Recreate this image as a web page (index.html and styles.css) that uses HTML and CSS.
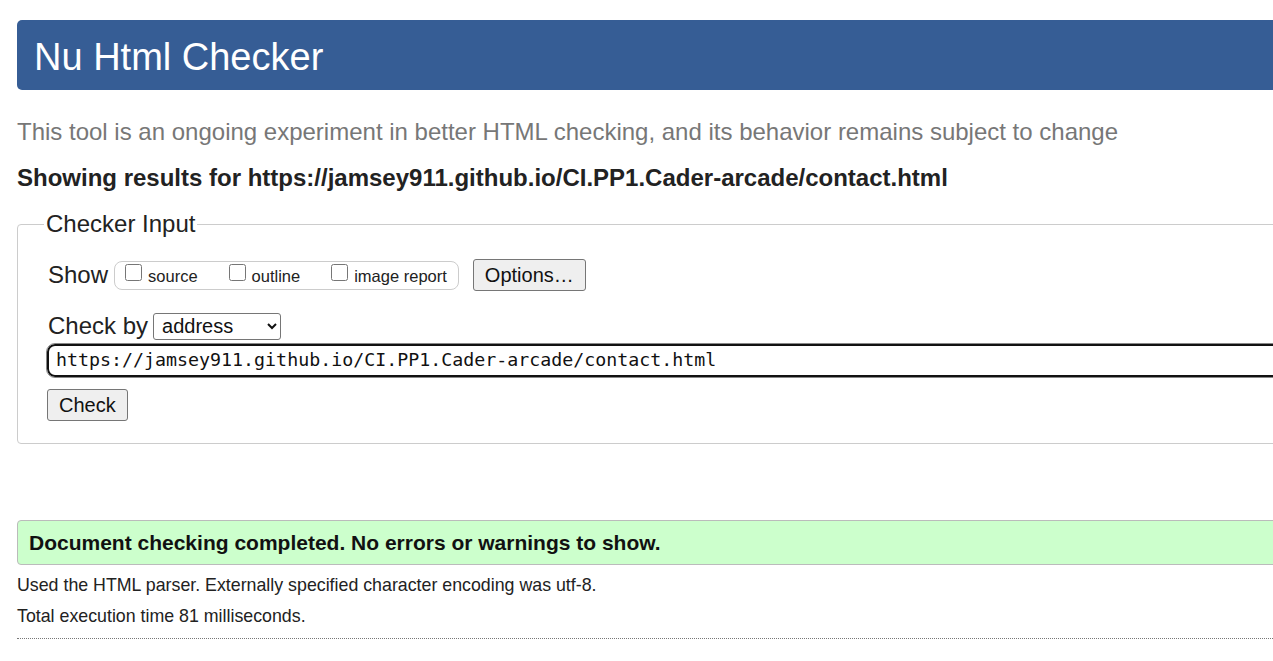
FILE: index.html
```html
<!DOCTYPE html>
<html lang="en">
<head>
<meta charset="utf-8">
<title>Nu Html Checker</title>
<link rel="stylesheet" href="styles.css">
</head>
<body>
<div class="page">
  <h1 class="title-bar">Nu Html Checker</h1>
  <p class="intro">This tool is an ongoing experiment in better HTML checking, and its behavior remains subject to change</p>
  <p class="showing">Showing results for https://jamsey911.github.io/CI.PP1.Cader-arcade/contact.html</p>
  <fieldset class="checker">
    <legend>Checker Input</legend>
    <div class="show-row">
      <span class="lbl">Show</span>
      <span class="show-box">
        <label class="opt"><input type="checkbox"> source</label>
        <label class="opt"><input type="checkbox"> outline</label>
        <label class="opt"><input type="checkbox"> image report</label>
      </span>
      <button class="btn options">Options…</button>
    </div>
    <div class="by-row">
      <span class="lbl">Check by</span>
      <select class="sel"><option>address</option></select>
    </div>
    <div class="url-row">
      <input class="url" type="text" value="https://jamsey911.github.io/CI.PP1.Cader-arcade/contact.html">
    </div>
    <div class="check-row">
      <button class="btn check">Check</button>
    </div>
  </fieldset>
  <p class="success">Document checking completed. No errors or warnings to show.</p>
  <p class="meta">Used the HTML parser. Externally specified character encoding was utf-8.</p>
  <p class="meta">Total execution time 81 milliseconds.</p>
  <hr class="rule">
</div>
</body>
</html>
```

FILE: styles.css
```css
html, body {
  margin: 0;
  padding: 0;
  overflow: hidden;
  background: #fff;
}
body {
  font-family: "Liberation Sans", Arial, sans-serif;
  color: #222;
}
.page {
  width: 1330px;
  padding: 20px 0 0 17px;
}
.title-bar {
  margin: 0;
  background: #365d95;
  color: #fff;
  font-weight: normal;
  font-size: 38px;
  height: 70px;
  box-sizing: border-box;
  line-height: 68px;
  padding: 3px 0 0 17px;
  border-radius: 5px;
}
.intro {
  margin: 27px 0 0 0;
  font-size: 24px;
  color: #777;
  line-height: 30px;
}
.showing {
  margin: 16px 0 0 0;
  font-size: 24px;
  font-weight: bold;
  color: #222;
  line-height: 30px;
}
.checker {
  margin: 17px 0 0 0;
  border: 1px solid #ccc;
  border-radius: 4px;
  padding: 21px 0 22px 30px;
}
.checker legend {
  font-size: 24px;
  padding: 0 2px;
  margin-left: -4px;
  color: #222;
}
.show-row, .by-row {
  display: flex;
  align-items: center;
}
.lbl {
  font-size: 24px;
  color: #222;
  margin-right: 7px;
}
.show-row .lbl {
  margin-right: 6px;
}
.show-box {
  display: inline-flex;
  align-items: center;
  border: 1px solid #ccc;
  border-radius: 8px;
  height: 27px;
  padding: 0 11px 0 10px;
  gap: 31px;
  margin-right: 14px;
}
.opt {
  font-size: 16.5px;
  display: inline-flex;
  align-items: center;
  gap: 6px;
  padding-top: 3px;
}
.opt input {
  margin: 0;
  width: 17px;
  height: 17px;
  position: relative;
  top: -4px;
}
.btn {
  font-family: "Liberation Sans", Arial, sans-serif;
  color: #111;
  background: #efefef;
  border: 1px solid #767676;
  border-radius: 3px;
  font-size: 20px;
}
.options {
  height: 32px;
  padding: 0 11px;
}
.by-row {
  margin-top: 21px;
}
.sel {
  font-family: "Liberation Sans", Arial, sans-serif;
  font-size: 20px;
  height: 27px;
  width: 128px;
  border: 1px solid #767676;
  border-radius: 3px;
  background: #fff;
  color: #111;
  margin-left: -2px;
  padding: 0 4px;
}
.url-row {
  margin-top: 4px;
  margin-left: -1px;
}
.url {
  box-sizing: border-box;
  width: 1300px;
  height: 33px;
  font-family: "DejaVu Sans Mono", "Liberation Mono", monospace;
  font-size: 18.3px;
  border: 2px solid #111;
  outline: 1px solid #888;
  border-radius: 8px;
  padding: 0 0 2px 7px;
  color: #111;
}
.check-row {
  margin-top: 12px;
  margin-left: -1px;
}
.check {
  height: 32px;
  padding: 0 11px;
}
.success {
  margin: 76px 0 0 0;
  background: #ccffcc;
  border: 1px solid #bbb;
  border-radius: 4px;
  font-weight: bold;
  font-size: 21px;
  height: 43px;
  line-height: 43px;
  padding: 0 0 0 11px;
  color: #111;
}
.meta {
  margin: 9px 0 0 0;
  font-size: 17.8px;
  line-height: 23px;
  color: #222;
}
.meta + .meta {
  margin-top: 8px;
}
.rule {
  margin: 10px 0 0 0;
  border: 0;
  border-top: 1px dotted #777;
}
```
